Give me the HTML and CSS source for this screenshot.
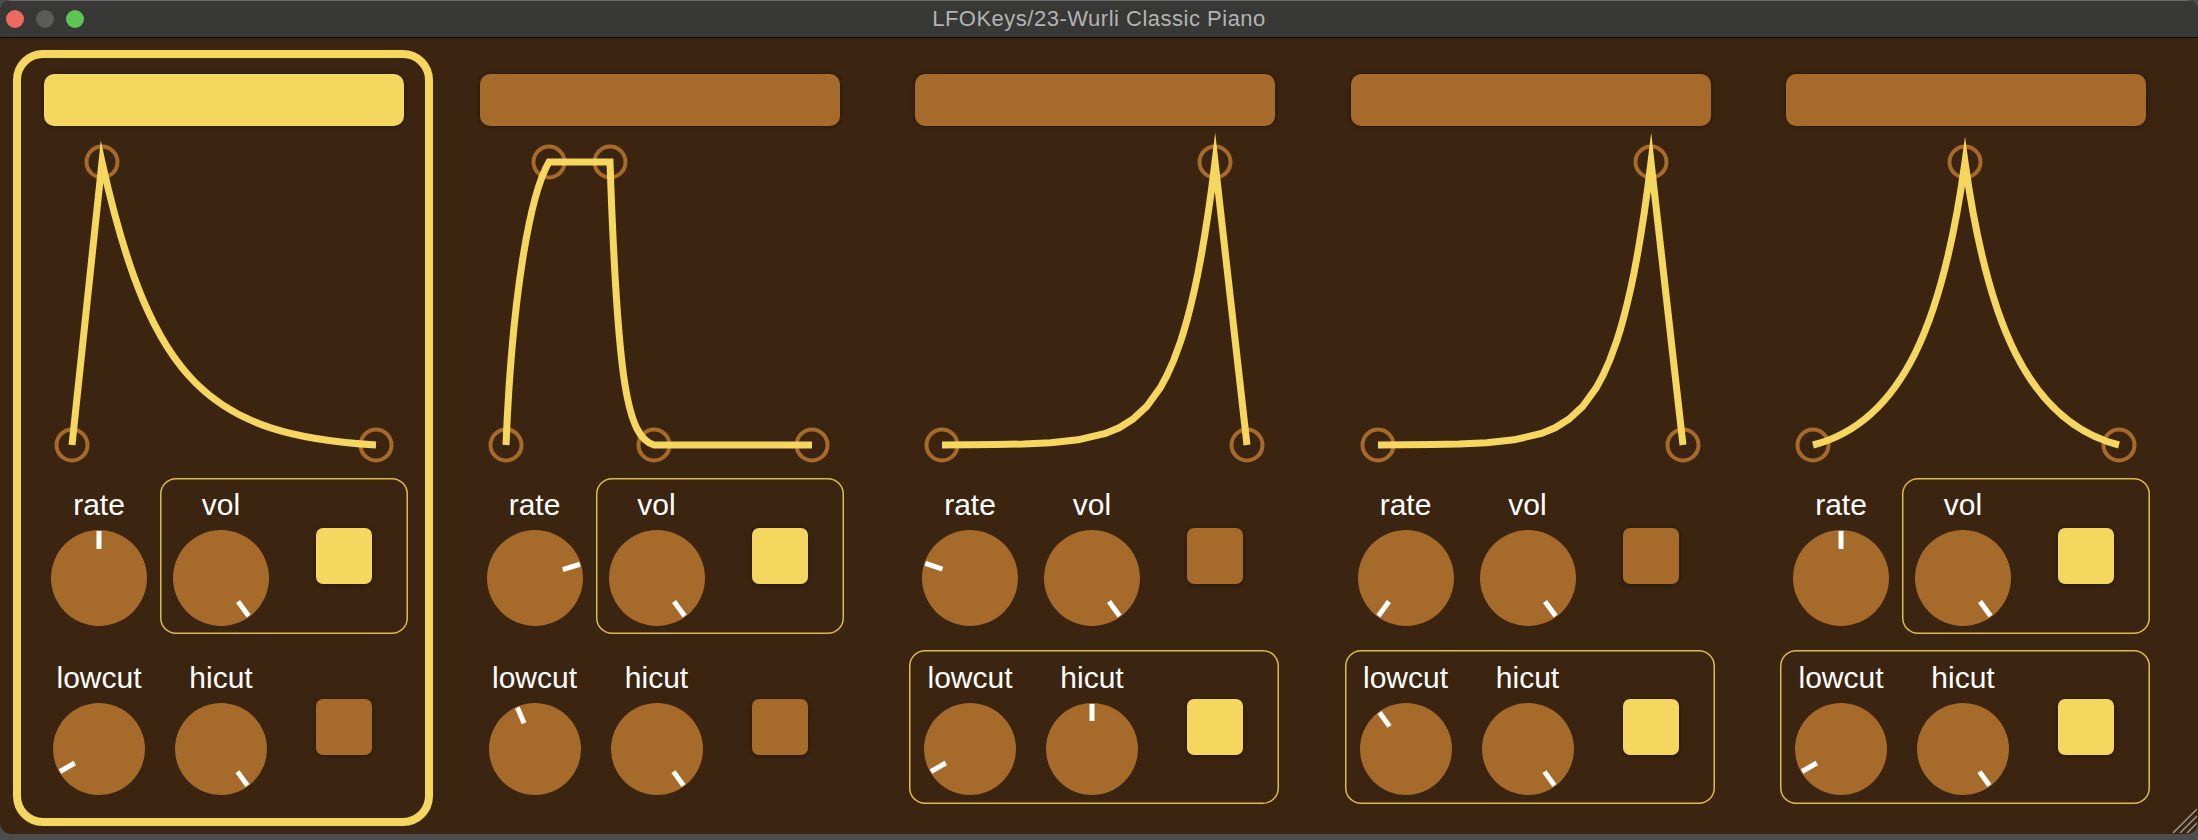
FILE: index.html
```html
<!DOCTYPE html>
<html>
<head>
<meta charset="utf-8">
<title>LFOKeys/23-Wurli Classic Piano</title>
<link rel="stylesheet" href="styles.css">
</head>
<body>
<div class="window">
  <header class="titlebar">
    <div class="lights"><span class="light red"></span><span class="light gray"></span><span class="light green"></span></div>
    <div class="title">LFOKeys/23-Wurli Classic Piano</div>
    <div></div>
  </header>
  <main class="content">

    <!-- Lane 1 -->
    <section class="lane selected">
      <div class="bar on"></div>
      <svg class="env" viewBox="0 0 404 340" width="404" height="340">
        <g class="pts"><circle cx="51" cy="319" r="15.5"/><circle cx="81" cy="36" r="15.5"/><circle cx="355" cy="319" r="15.5"/></g>
        <path class="curve" d="M51 319 L81 36 C130.3 258.2 190.6 309.1 355 319"/>
      </svg>
      <div class="row row1">
        <div class="cell"><div class="label">rate</div><svg class="knob" viewBox="-48 -48 96 96" width="96" height="96"><circle r="48"/><line x1="0" y1="-47" x2="0" y2="-29" transform="rotate(0)"/></svg></div>
        <div class="group on">
          <div class="cell"><div class="label">vol</div><svg class="knob" viewBox="-48 -48 96 96" width="96" height="96"><circle r="48"/><line x1="0" y1="-47" x2="0" y2="-29" transform="rotate(144)"/></svg></div>
          <div class="toggle on"></div>
        </div>
      </div>
      <div class="row row2">
        <div class="group">
          <div class="cell"><div class="label">lowcut</div><svg class="knob" viewBox="-46 -46 92 92" width="92" height="92"><circle r="46"/><line x1="0" y1="-45" x2="0" y2="-28" transform="rotate(-120)"/></svg></div>
          <div class="cell"><div class="label">hicut</div><svg class="knob" viewBox="-46 -46 92 92" width="92" height="92"><circle r="46"/><line x1="0" y1="-45" x2="0" y2="-28" transform="rotate(144)"/></svg></div>
          <div class="toggle"></div>
        </div>
      </div>
    </section>

    <!-- Lane 2 -->
    <section class="lane">
      <div class="bar"></div>
      <svg class="env" viewBox="0 0 404 340" width="404" height="340">
        <g class="pts"><circle cx="49" cy="319" r="15.5"/><circle cx="92" cy="36" r="15.5"/><circle cx="153" cy="36" r="15.5"/><circle cx="197" cy="319" r="15.5"/><circle cx="355" cy="319" r="15.5"/></g>
        <path class="curve" d="M49 319 C55 170 73 68 92 36 L153 36 C160.7 261.3 170.6 310.5 197 319 L355 319"/>
      </svg>
      <div class="row row1">
        <div class="cell"><div class="label">rate</div><svg class="knob" viewBox="-48 -48 96 96" width="96" height="96"><circle r="48"/><line x1="0" y1="-47" x2="0" y2="-29" transform="rotate(73)"/></svg></div>
        <div class="group on">
          <div class="cell"><div class="label">vol</div><svg class="knob" viewBox="-48 -48 96 96" width="96" height="96"><circle r="48"/><line x1="0" y1="-47" x2="0" y2="-29" transform="rotate(144)"/></svg></div>
          <div class="toggle on"></div>
        </div>
      </div>
      <div class="row row2">
        <div class="group">
          <div class="cell"><div class="label">lowcut</div><svg class="knob" viewBox="-46 -46 92 92" width="92" height="92"><circle r="46"/><line x1="0" y1="-45" x2="0" y2="-28" transform="rotate(-23)"/></svg></div>
          <div class="cell"><div class="label">hicut</div><svg class="knob" viewBox="-46 -46 92 92" width="92" height="92"><circle r="46"/><line x1="0" y1="-45" x2="0" y2="-28" transform="rotate(144)"/></svg></div>
          <div class="toggle"></div>
        </div>
      </div>
    </section>

    <!-- Lane 3 -->
    <section class="lane">
      <div class="bar"></div>
      <svg class="env" viewBox="0 0 404 340" width="404" height="340">
        <g class="pts"><circle cx="50" cy="319" r="15.5"/><circle cx="323" cy="36" r="15.5"/><circle cx="355" cy="319" r="15.5"/></g>
        <path class="curve" d="M50 319 L103.8 318.5 L131.2 318 L158.6 316.7 L186 313.8 L213.4 307.5 L227.1 301.8 L240.8 293.3 L254.5 280.7 L268.2 261.9 L275.05 249.2 L281.9 233.8 L288.75 214.9 L292.2 203.9 L295.6 191.8 L299 178.5 L302.45 163.7 L305.9 147.4 L309.3 129.3 L312.7 109.4 L316.15 87.3 L319.6 62.9 L323 36 L355 319"/>
      </svg>
      <div class="row row1">
        <div class="cell"><div class="label">rate</div><svg class="knob" viewBox="-48 -48 96 96" width="96" height="96"><circle r="48"/><line x1="0" y1="-47" x2="0" y2="-29" transform="rotate(-72)"/></svg></div>
        <div class="group">
          <div class="cell"><div class="label">vol</div><svg class="knob" viewBox="-48 -48 96 96" width="96" height="96"><circle r="48"/><line x1="0" y1="-47" x2="0" y2="-29" transform="rotate(144)"/></svg></div>
          <div class="toggle"></div>
        </div>
      </div>
      <div class="row row2">
        <div class="group on">
          <div class="cell"><div class="label">lowcut</div><svg class="knob" viewBox="-46 -46 92 92" width="92" height="92"><circle r="46"/><line x1="0" y1="-45" x2="0" y2="-28" transform="rotate(-120)"/></svg></div>
          <div class="cell"><div class="label">hicut</div><svg class="knob" viewBox="-46 -46 92 92" width="92" height="92"><circle r="46"/><line x1="0" y1="-45" x2="0" y2="-28" transform="rotate(0)"/></svg></div>
          <div class="toggle on"></div>
        </div>
      </div>
    </section>

    <!-- Lane 4 -->
    <section class="lane">
      <div class="bar"></div>
      <svg class="env" viewBox="0 0 404 340" width="404" height="340">
        <g class="pts"><circle cx="50" cy="319" r="15.5"/><circle cx="323" cy="36" r="15.5"/><circle cx="355" cy="319" r="15.5"/></g>
        <path class="curve" d="M50 319 L103.8 318.5 L131.2 318 L158.6 316.7 L186 313.8 L213.4 307.5 L227.1 301.8 L240.8 293.3 L254.5 280.7 L268.2 261.9 L275.05 249.2 L281.9 233.8 L288.75 214.9 L292.2 203.9 L295.6 191.8 L299 178.5 L302.45 163.7 L305.9 147.4 L309.3 129.3 L312.7 109.4 L316.15 87.3 L319.6 62.9 L323 36 L355 319"/>
      </svg>
      <div class="row row1">
        <div class="cell"><div class="label">rate</div><svg class="knob" viewBox="-48 -48 96 96" width="96" height="96"><circle r="48"/><line x1="0" y1="-47" x2="0" y2="-29" transform="rotate(-144)"/></svg></div>
        <div class="group">
          <div class="cell"><div class="label">vol</div><svg class="knob" viewBox="-48 -48 96 96" width="96" height="96"><circle r="48"/><line x1="0" y1="-47" x2="0" y2="-29" transform="rotate(144)"/></svg></div>
          <div class="toggle"></div>
        </div>
      </div>
      <div class="row row2">
        <div class="group on">
          <div class="cell"><div class="label">lowcut</div><svg class="knob" viewBox="-46 -46 92 92" width="92" height="92"><circle r="46"/><line x1="0" y1="-45" x2="0" y2="-28" transform="rotate(-36)"/></svg></div>
          <div class="cell"><div class="label">hicut</div><svg class="knob" viewBox="-46 -46 92 92" width="92" height="92"><circle r="46"/><line x1="0" y1="-45" x2="0" y2="-28" transform="rotate(144)"/></svg></div>
          <div class="toggle on"></div>
        </div>
      </div>
    </section>

    <!-- Lane 5 -->
    <section class="lane">
      <div class="bar"></div>
      <svg class="env" viewBox="0 0 404 340" width="404" height="340">
        <g class="pts"><circle cx="50" cy="319" r="15.5"/><circle cx="202" cy="36" r="15.5"/><circle cx="356" cy="319" r="15.5"/></g>
        <path class="curve" d="M50 319 C141.2 295.9 180.5 191.7 202 36 C223.5 191.7 263.6 295.9 356 319"/>
      </svg>
      <div class="row row1">
        <div class="cell"><div class="label">rate</div><svg class="knob" viewBox="-48 -48 96 96" width="96" height="96"><circle r="48"/><line x1="0" y1="-47" x2="0" y2="-29" transform="rotate(0)"/></svg></div>
        <div class="group on">
          <div class="cell"><div class="label">vol</div><svg class="knob" viewBox="-48 -48 96 96" width="96" height="96"><circle r="48"/><line x1="0" y1="-47" x2="0" y2="-29" transform="rotate(144)"/></svg></div>
          <div class="toggle on"></div>
        </div>
      </div>
      <div class="row row2">
        <div class="group on">
          <div class="cell"><div class="label">lowcut</div><svg class="knob" viewBox="-46 -46 92 92" width="92" height="92"><circle r="46"/><line x1="0" y1="-45" x2="0" y2="-28" transform="rotate(-120)"/></svg></div>
          <div class="cell"><div class="label">hicut</div><svg class="knob" viewBox="-46 -46 92 92" width="92" height="92"><circle r="46"/><line x1="0" y1="-45" x2="0" y2="-28" transform="rotate(144)"/></svg></div>
          <div class="toggle on"></div>
        </div>
      </div>
    </section>

  </main>
  <svg class="grip" viewBox="0 0 30 30" width="30" height="30">
    <line x1="6" y1="30" x2="30" y2="6"/>
    <line x1="13" y1="30" x2="30" y2="13"/>
    <line x1="20" y1="30" x2="30" y2="20"/>
  </svg>
</div>
</body>
</html>
```

FILE: styles.css
```css
html, body {
  margin: 0;
  padding: 0;
}

body {
  width: 2198px;
  height: 840px;
  overflow: hidden;
  background: #4d4d4d;
  font-family: "Liberation Sans", Arial, sans-serif;
}

.window {
  position: relative;
  width: 2198px;
  height: 834px;
  border-radius: 11px;
  overflow: hidden;
  background: #3c2510;
  display: flex;
  flex-direction: column;
}

.titlebar {
  height: 37px;
  flex: none;
  background: #383837;
  border-bottom: 1px solid #0c0c0c;
  box-shadow: inset 0 1px 0 #6a6a6a;
  display: grid;
  grid-template-columns: 1fr auto 1fr;
  align-items: center;
}

.lights {
  display: flex;
  gap: 12px;
  padding-left: 6px;
}

.light {
  width: 18px;
  height: 18px;
  border-radius: 50%;
}

.light.red { background: #ec6a5f; }
.light.gray { background: #5b5b5b; }
.light.green { background: #5fc454; }

.title {
  font-size: 22px;
  letter-spacing: 0.5px;
  color: #b3b3b3;
  white-space: nowrap;
}

.content {
  flex: 1;
  display: flex;
  gap: 15.5px;
  padding: 12px 0 0 13px;
}

.lane {
  flex: none;
  width: 420px;
  height: 776px;
  box-sizing: border-box;
  border: 8px solid transparent;
  border-radius: 30px;
}

.lane.selected {
  border-color: #f5d65f;
}

.bar {
  height: 52px;
  margin: 16px 21px 0 23px;
  border-radius: 10px;
  background: #a66a2a;
  box-shadow: 0 0 5px rgba(0, 0, 0, 0.45);
}

.bar.on {
  background: #f5d65f;
}

.env {
  display: block;
  width: 404px;
  height: 340px;
  overflow: visible;
}

.env .pts circle {
  fill: none;
  stroke: #a66a2a;
  stroke-width: 4;
}

.env .curve {
  fill: none;
  stroke: #f5d65f;
  stroke-width: 7;
  stroke-linejoin: miter;
  stroke-miterlimit: 14;
  stroke-linecap: butt;
}

.row {
  display: flex;
  align-items: flex-start;
  padding-left: 17px;
}

.row1 { margin-top: 12px; }
.row2 { margin-top: 16px; }

.cell {
  width: 122px;
  display: flex;
  flex-direction: column;
  align-items: center;
  padding: 9px 0 8px;
}

.row2 .cell {
  padding: 10px 0 9px;
}

.label {
  font-size: 30px;
  line-height: 36px;
  color: #ffffff;
  height: 36px;
  margin-bottom: 7px;
}

.knob {
  display: block;
}

.knob circle {
  fill: #a66a2a;
}

.knob line {
  stroke: #ffffff;
  stroke-width: 5;
}

.group {
  display: flex;
  align-items: flex-start;
  padding-right: 36px;
  border-radius: 16px;
}

.group.on {
  box-shadow: inset 0 0 0 1.5px #dcbb4d;
}

.toggle {
  width: 56px;
  height: 56px;
  margin-left: 34px;
  margin-top: 50px;
  border-radius: 7px;
  background: #a66a2a;
  box-shadow: 0 1px 5px rgba(0, 0, 0, 0.4);
}

.row2 .toggle {
  margin-top: 49px;
}

.toggle.on {
  background: #f5d65f;
}

.grip {
  position: absolute;
  right: 1px;
  bottom: 1px;
}

.grip line {
  stroke: #9a9a9a;
  stroke-width: 1.5;
}
```
